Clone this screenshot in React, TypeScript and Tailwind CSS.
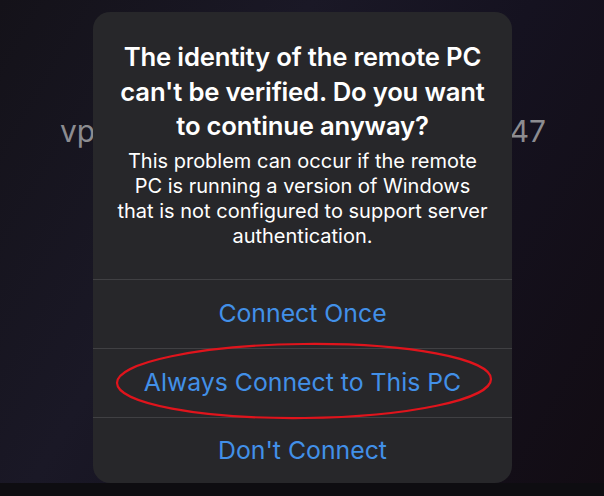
export default function App() {
  return (
    <div
      className="relative w-[604px] h-[496px] overflow-hidden bg-[linear-gradient(120deg,#141219_0%,#1a1826_35%,#151220_60%,#120c13_100%)]"
      style={{ fontFamily: "Inter, 'Noto Sans', sans-serif" }}
    >
      <div className="flex justify-between items-center pt-[113px] pl-[60px] pr-[58px]">
        <span className="text-[30px] leading-[36px] text-[#8c8c90]">vp</span>
        <span className="text-[30px] leading-[36px] text-[#8c8c90]">47</span>
      </div>
      <div className="absolute inset-x-0 bottom-0 h-[13px] bg-[#0e0d11]" />
      <div className="absolute inset-0 pt-[12px] pl-[93px]">
        <div className="relative w-[419px] h-[471px] rounded-[17px] bg-[#27272a] flex flex-col">
          <div className="flex flex-col items-center text-center text-white px-[16px] pt-[28px] h-[267px]">
            <div className="font-semibold text-[25.7px] leading-[34.5px] tracking-[-0.2px]">
              The identity of the remote PC
              <br />
              can't be verified. Do you want
              <br />
              to continue anyway?
            </div>
            <div className="text-[20px] leading-[25px] mt-[5px]">
              This problem can occur if the remote
              <br />
              PC is running a version of Windows
              <br />
              that is not configured to support server
              <br />
              authentication.
            </div>
          </div>
          <div className="h-px bg-[#404043]" />
          <div className="h-[68px] flex items-center justify-center text-[24.8px] text-[#4290e8]">Connect Once</div>
          <div className="h-px bg-[#404043]" />
          <div className="h-[68px] flex items-center justify-center text-[24.8px] text-[#4290e8]">Always Connect to This PC</div>
          <div className="h-px bg-[#404043]" />
          <div className="flex-1 flex items-center justify-center text-[24.8px] text-[#4290e8]">Don't Connect</div>
          <svg className="absolute left-[22px] top-[330px]" width="380" height="80" viewBox="0 0 380 80">
            <ellipse cx="189" cy="39" rx="187" ry="37" fill="none" stroke="#e0141c" strokeWidth="2.2" transform="rotate(-0.6 189 39)" />
          </svg>
        </div>
      </div>
    </div>
  );
}
